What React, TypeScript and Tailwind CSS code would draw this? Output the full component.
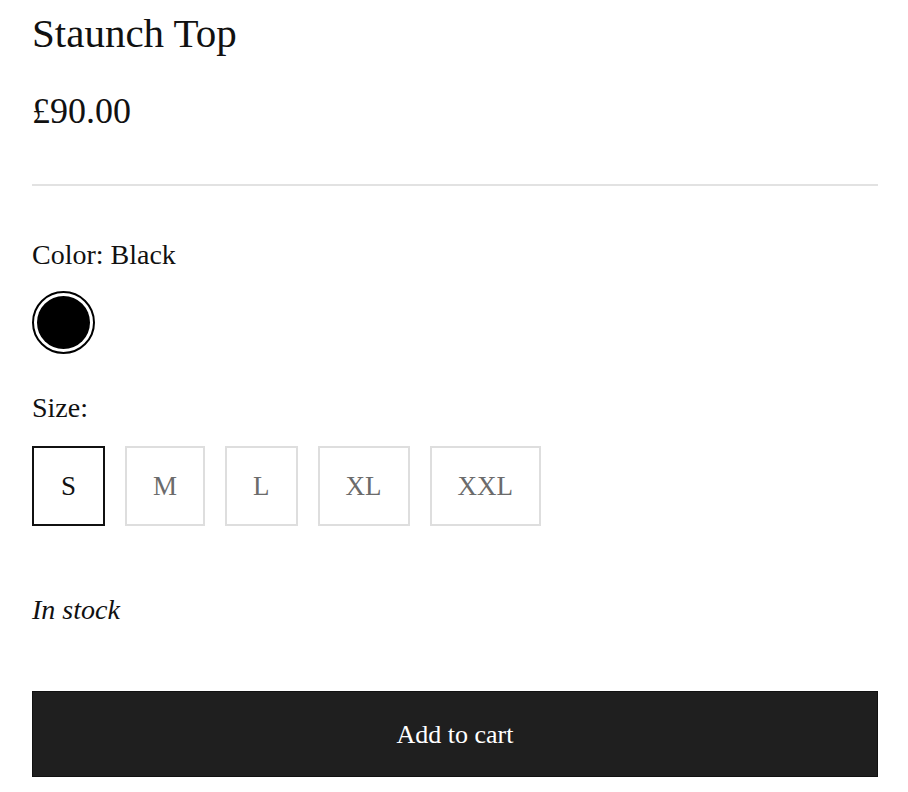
const sizes = ["S", "M", "L", "XL", "XXL"];

export default function App() {
  const selected = "S";

  return (
    <div
      className="min-h-[792px] bg-white pl-8 pr-[30px] pt-[9px] text-[#111]"
      style={{ fontFamily: '"Liberation Serif", "Times New Roman", serif' }}
    >
      <h1 className="text-[41px] leading-[48px]">Staunch Top</h1>
      <div className="mt-[34px] text-[36px] leading-[40px]">£90.00</div>

      <hr className="mt-[53px] h-[2px] border-0 bg-[#e2e2e2]" />

      <div className="mt-[53px] text-[28px] leading-[32px]">Color: Black</div>
      <div className="mt-[20px] flex">
        <button className="flex h-[63px] w-[63px] items-center justify-center rounded-full border-2 border-black bg-white">
          <span className="block h-[53px] w-[53px] rounded-full bg-black" />
        </button>
      </div>

      <div className="mt-[38px] text-[28px] leading-[32px]">Size:</div>
      <div className="mt-[22px] flex gap-5">
        {sizes.map((s) => (
          <button
            key={s}
            className={
              s === selected
                ? "h-20 border-2 border-[#111] px-[27px] text-[27px] leading-[32px] text-[#111]"
                : "h-20 border-2 border-[#dedede] px-[26px] text-[27px] leading-[32px] text-[#6b6b6b]"
            }
          >
            {s}
          </button>
        ))}
      </div>

      <div className="mt-[68px] text-[28px] italic leading-[32px]">In stock</div>

      <button className="mt-[65px] flex h-[86px] w-full items-center justify-center border border-[#111] bg-[#1f1f1f] text-[26px] text-white">
        Add to cart
      </button>
    </div>
  );
}
